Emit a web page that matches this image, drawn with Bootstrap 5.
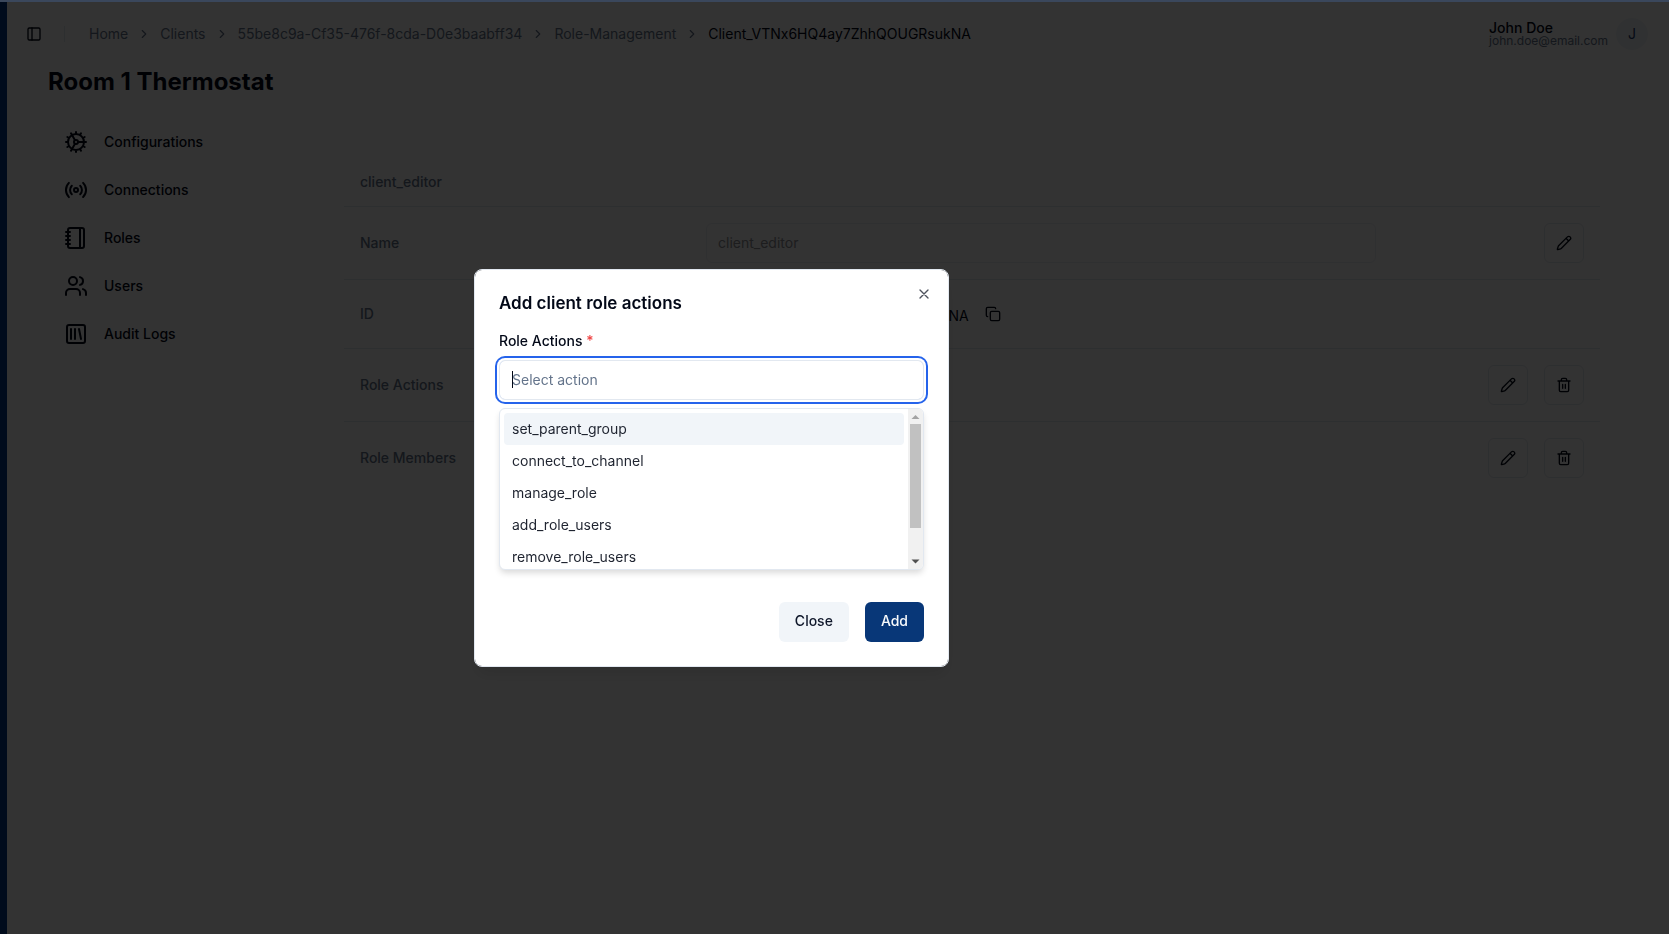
<!DOCTYPE html>
<html lang="en">
<head>
<meta charset="utf-8">
<meta name="viewport" content="width=device-width, initial-scale=1">
<title>Room 1 Thermostat</title>
<link href="https://cdn.jsdelivr.net/npm/bootstrap@5.3.0/dist/css/bootstrap.min.css" rel="stylesheet">
<style>
  :root { --ink: #020817; --muted: #64748b; --line: #e2e8f0; --soft: #f1f5f9; --navy: #083778; }
  body { font-family: Inter, "Liberation Sans", sans-serif; font-size: 14px; line-height: 20px; color: var(--ink); background: #fff; overflow: hidden; }
  svg { fill: none; stroke: currentColor; stroke-width: 2; stroke-linecap: round; stroke-linejoin: round; flex: none; display: block; }
  a { color: inherit; text-decoration: none; }
  .top-line { height: 2px; background: #3a475c; z-index: 1060; }
  .rail { width: 7px; background: #00388c; flex: none; }
  .shell { min-height: 100vh; }
  .topbar { height: 64px; margin-top: 2px; padding: 0 21px 0 13px; }
  .icon-btn { width: 28px; height: 28px; padding: 6px; border: 0; background: none; color: var(--ink); }
  .split { width: 1px; height: 16px; background: var(--line); margin: 0 24px 0 16px; }
  .crumbs { gap: 9px; color: var(--muted); }
  .crumbs li { gap: 9px; }
  .crumbs li[aria-current] { color: var(--ink); }
  .user-name { font-weight: 500; line-height: 14px; }
  .user-mail { font-size: 12px; line-height: 12px; color: var(--muted); }
  .avatar { width: 32px; height: 32px; background: var(--soft); color: #1e3a6d; }
  .page-title { font-size: 24px; line-height: 32px; font-weight: 700; margin: 0 0 0 41px; }
  .side { width: 337px; flex: none; padding: 24px 0 0 57px; }
  .side a { height: 40px; gap: 16px; font-weight: 500; }
  .roles-wrap { padding: 60px 69px 0 0; }
  .roles { table-layout: fixed; }
  .roles > :not(caption) > * > * { padding: 16px; vertical-align: middle; color: var(--muted); border-bottom: 1px solid var(--line); font-weight: 500; background: none; box-shadow: none; }
  .roles thead th { height: 48px; padding-top: 0; padding-bottom: 0; }
  .roles tbody tr:last-child > * { border-bottom: 0; }
  .roles .label-col { width: 346px; }
  .roles .act-col { width: 160px; }
  .roles td .form-control { height: 40px; padding: 0 11px; font-size: 14px; border: 1px solid #eceff4; border-radius: 6px; background: #fff; color: #8f9196; }
  .roles .name-cell { padding-right: 64px; }
  .tool-btn { width: 40px; height: 40px; padding: 11px; border: 1px solid var(--line); border-radius: 6px; background: #fff; color: var(--ink); }
  .client-id { color: var(--ink); font-weight: 400; height: 36px; gap: 16px; }
  .client-id span { padding-top: 4px; }
  .modal-backdrop.show { opacity: .8; }
  .modal { padding-top: 2px; padding-right: 246px; }
  .modal-dialog { max-width: 475px; }
  .modal-content { padding: 24px; border: 1px solid var(--line); border-radius: 8px; color: var(--ink); box-shadow: 0 10px 15px -3px rgba(0,0,0,.1); }
  .modal-title { font-size: 17px; line-height: 18px; font-weight: 600; }
  .dismiss { top: 16px; right: 16px; width: 16px; height: 16px; padding: 0; border: 0; background: none; color: #4e525d; }
  .field-label { font-weight: 500; margin: 19px 0 9px; }
  .required { color: #ef4444; }
  .combo { margin-bottom: 202px; }
  .combo .form-control { height: 40px; padding: 0 12px 2px; font-size: 14px; line-height: 20px; border: 1px solid var(--line); border-radius: 6px; box-shadow: 0 0 0 2px #fff, 0 0 0 4px #2563eb; }
  .combo .form-control::placeholder { color: var(--muted); }
  .text-caret { left: 13px; top: 11px; width: 1px; height: 17px; background: var(--ink); }
  .options { top: 48px; left: 0; right: 0; height: 162px; border: 1px solid var(--line); border-radius: 6px; background: #fff; box-shadow: 0 4px 6px -1px rgba(0,0,0,.15); overflow: hidden; color: #1f2430; }
  .options ul { padding: 4px; overflow: hidden; }
  .options li { padding: 6px 8px; border-radius: 4px; }
  .options li[aria-selected="true"] { background: var(--soft); }
  .scroll-track { width: 15px; background: #f1f1f1; }
  .scroll-track svg { width: 15px; height: 15px; stroke: none; }
  .scroll-thumb { width: 11px; height: 104px; background: #c1c1c1; }
  .modal .btn { height: 40px; padding: 0 16px 2px; border: 0; border-radius: 6px; font-size: 14px; line-height: 20px; font-weight: 500; }
  .btn-quiet, .btn-quiet:hover { background: var(--soft); color: #0f172a; }
  .btn-navy, .btn-navy:hover { background: var(--navy); color: #f8fafc; }
</style>
</head>
<body>
<svg class="d-none" aria-hidden="true">
  <symbol id="chevron" viewBox="0 0 24 24"><path d="m9 18 6-6-6-6"/></symbol>
  <symbol id="pencil" viewBox="0 0 24 24"><path d="M21.174 6.812a1 1 0 0 0-3.986-3.987L3.842 16.174a2 2 0 0 0-.5.83l-1.321 4.352a.5.5 0 0 0 .623.622l4.353-1.32a2 2 0 0 0 .83-.497zM15 5l4 4"/></symbol>
  <symbol id="trash" viewBox="0 0 24 24"><path d="M3 6h18M19 6v14c0 1-1 2-2 2H7c-1 0-2-1-2-2V6M8 6V4c0-1 1-2 2-2h4c1 0 2 1 2 2v2M10 11v6M14 11v6"/></symbol>
</svg>
<div class="top-line fixed-top"></div>
<div class="shell d-flex">
  <div class="rail"></div>
  <div class="flex-grow-1">
    <header class="topbar d-flex align-items-center">
      <button class="icon-btn" type="button" aria-label="Toggle sidebar"><svg width="16" height="16" viewBox="0 0 24 24"><rect x="3" y="3" width="18" height="18" rx="2"/><path d="M9 3v18"/></svg></button>
      <div class="split"></div>
      <nav aria-label="Breadcrumb">
        <ol class="crumbs list-unstyled d-flex align-items-center m-0">
          <li class="d-flex align-items-center"><a href="#">Home</a><svg width="14" height="14"><use href="#chevron"/></svg></li>
          <li class="d-flex align-items-center"><a href="#">Clients</a><svg width="14" height="14"><use href="#chevron"/></svg></li>
          <li class="d-flex align-items-center"><a href="#">55be8c9a-Cf35-476f-8cda-D0e3baabff34</a><svg width="14" height="14"><use href="#chevron"/></svg></li>
          <li class="d-flex align-items-center"><a href="#">Role-Management</a><svg width="14" height="14"><use href="#chevron"/></svg></li>
          <li aria-current="page">Client_VTNx6HQ4ay7ZhhQOUGRsukNA</li>
        </ol>
      </nav>
      <div class="ms-auto d-flex align-items-center gap-2">
        <div><div class="user-name">John Doe</div><div class="user-mail">john.doe@email.com</div></div>
        <div class="avatar rounded-circle d-flex align-items-center justify-content-center">J</div>
      </div>
    </header>
    <h1 class="page-title">Room 1 Thermostat</h1>
    <div class="d-flex">
      <nav class="side d-flex flex-column gap-2" aria-label="Client">
        <a href="#" class="d-flex align-items-center"><svg width="24" height="24" viewBox="0 0 24 24"><path d="M12 20a8 8 0 1 0 0-16 8 8 0 0 0 0 16ZM12 14a2 2 0 1 0 0-4 2 2 0 0 0 0 4ZM12 2v2M12 22v-2M17 20.66l-1-1.73M11 10.27 7 3.34M20.66 17l-1.73-1M3.34 7l1.73 1M14 12h8M2 12h2M20.66 7l-1.73 1M3.34 17l1.73-1M17 3.34l-1 1.73M11 13.73l-4 6.93"/></svg>Configurations</a>
        <a href="#" class="d-flex align-items-center"><svg width="24" height="24" viewBox="0 0 24 24"><path d="M4.9 19.1C1 15.2 1 8.8 4.9 4.9M7.8 16.2c-2.3-2.3-2.3-6.1 0-8.5M16.2 7.8c2.3 2.3 2.3 6.1 0 8.5M19.1 4.9C23 8.8 23 15.1 19.1 19"/><circle cx="12" cy="12" r="2"/></svg>Connections</a>
        <a href="#" class="d-flex align-items-center"><svg width="24" height="24" viewBox="0 0 24 24"><path d="M2 6h4M2 10h4M2 14h4M2 18h4M16 2v20"/><rect x="4" y="2" width="16" height="20" rx="2"/></svg>Roles</a>
        <a href="#" class="d-flex align-items-center"><svg width="24" height="24" viewBox="0 0 24 24"><path d="M16 21v-2a4 4 0 0 0-4-4H6a4 4 0 0 0-4 4v2M22 21v-2a4 4 0 0 0-3-3.87M16 3.13a4 4 0 0 1 0 7.75"/><circle cx="9" cy="7" r="4"/></svg>Users</a>
        <a href="#" class="d-flex align-items-center"><svg width="24" height="24" viewBox="0 0 24 24"><rect x="3" y="3" width="18" height="18" rx="2"/><path d="M7 7v10M11 7v10M15 7l2 10"/></svg>Audit Logs</a>
      </nav>
      <div class="roles-wrap flex-grow-1">
        <table class="roles table w-100 mb-0">
          <colgroup><col class="label-col"><col><col class="act-col"></colgroup>
          <thead><tr><th colspan="3">client_editor</th></tr></thead>
          <tbody>
            <tr>
              <th scope="row"><label for="role-name">Name</label></th>
              <td class="name-cell"><input id="role-name" class="form-control" value="client_editor" disabled></td>
              <td><div class="d-flex justify-content-end"><button class="tool-btn" type="button" aria-label="Edit name"><svg width="16" height="16"><use href="#pencil"/></svg></button></div></td>
            </tr>
            <tr>
              <th scope="row">ID</th>
              <td colspan="2"><div class="client-id d-flex align-items-center"><span>Client_VTNx6HQ4ay7ZhhQOUGRsukNA</span><button class="icon-btn p-0 w-auto h-auto" type="button" aria-label="Copy ID"><svg width="16" height="16" viewBox="0 0 24 24"><rect x="8" y="8" width="14" height="14" rx="2"/><path d="M4 16c-1.100 0-2-.9-2-2V4c0-1.100.9-2 2-2h10c1.100 0 2 .9 2 2"/></svg></button></div></td>
            </tr>
            <tr>
              <th scope="row">Role Actions</th>
              <td colspan="2"><div class="d-flex justify-content-end gap-3"><button class="tool-btn" type="button" aria-label="Edit role actions"><svg width="16" height="16"><use href="#pencil"/></svg></button><button class="tool-btn" type="button" aria-label="Delete role actions"><svg width="16" height="16"><use href="#trash"/></svg></button></div></td>
            </tr>
            <tr>
              <th scope="row">Role Members</th>
              <td colspan="2"><div class="d-flex justify-content-end gap-3"><button class="tool-btn" type="button" aria-label="Edit role members"><svg width="16" height="16"><use href="#pencil"/></svg></button><button class="tool-btn" type="button" aria-label="Delete role members"><svg width="16" height="16"><use href="#trash"/></svg></button></div></td>
            </tr>
          </tbody>
        </table>
      </div>
    </div>
  </div>
</div>

<div class="modal-backdrop show"></div>
<div class="modal d-block" role="dialog" aria-modal="true" aria-labelledby="dialog-title">
  <div class="modal-dialog modal-dialog-centered">
    <form class="modal-content">
      <h2 class="modal-title" id="dialog-title">Add client role actions</h2>
      <button class="dismiss position-absolute" type="button" aria-label="Dismiss"><svg width="16" height="16" viewBox="0 0 24 24"><path d="M18 6 6 18M6 6l12 12"/></svg></button>
      <label class="field-label" for="role-actions">Role Actions <span class="required">*</span></label>
      <div class="combo position-relative">
        <input id="role-actions" class="form-control" placeholder="Select action" role="combobox" aria-expanded="true" aria-controls="action-list">
        <span class="text-caret position-absolute"></span>
        <div class="options position-absolute d-flex">
          <ul id="action-list" class="list-unstyled flex-grow-1 m-0" role="listbox">
            <li role="option" aria-selected="true">set_parent_group</li>
            <li role="option">connect_to_channel</li>
            <li role="option">manage_role</li>
            <li role="option">add_role_users</li>
            <li role="option">remove_role_users</li>
          </ul>
          <div class="scroll-track d-flex flex-column align-items-center" aria-hidden="true">
            <svg viewBox="0 0 15 15"><path fill="#a3a3a3" d="M7.500 6 11.500 10h-8z"/></svg>
            <div class="scroll-thumb"></div>
            <svg class="mt-auto" viewBox="0 0 15 15"><path fill="#505050" d="M7.500 9.500 11.500 5.500h-8z"/></svg>
          </div>
        </div>
      </div>
      <div class="d-flex justify-content-end gap-3">
        <button class="btn btn-quiet" type="button">Close</button>
        <button class="btn btn-navy" type="submit">Add</button>
      </div>
    </form>
  </div>
</div>
<script src="https://cdn.jsdelivr.net/npm/bootstrap@5.3.0/dist/js/bootstrap.bundle.min.js"></script>
</body>
</html>
